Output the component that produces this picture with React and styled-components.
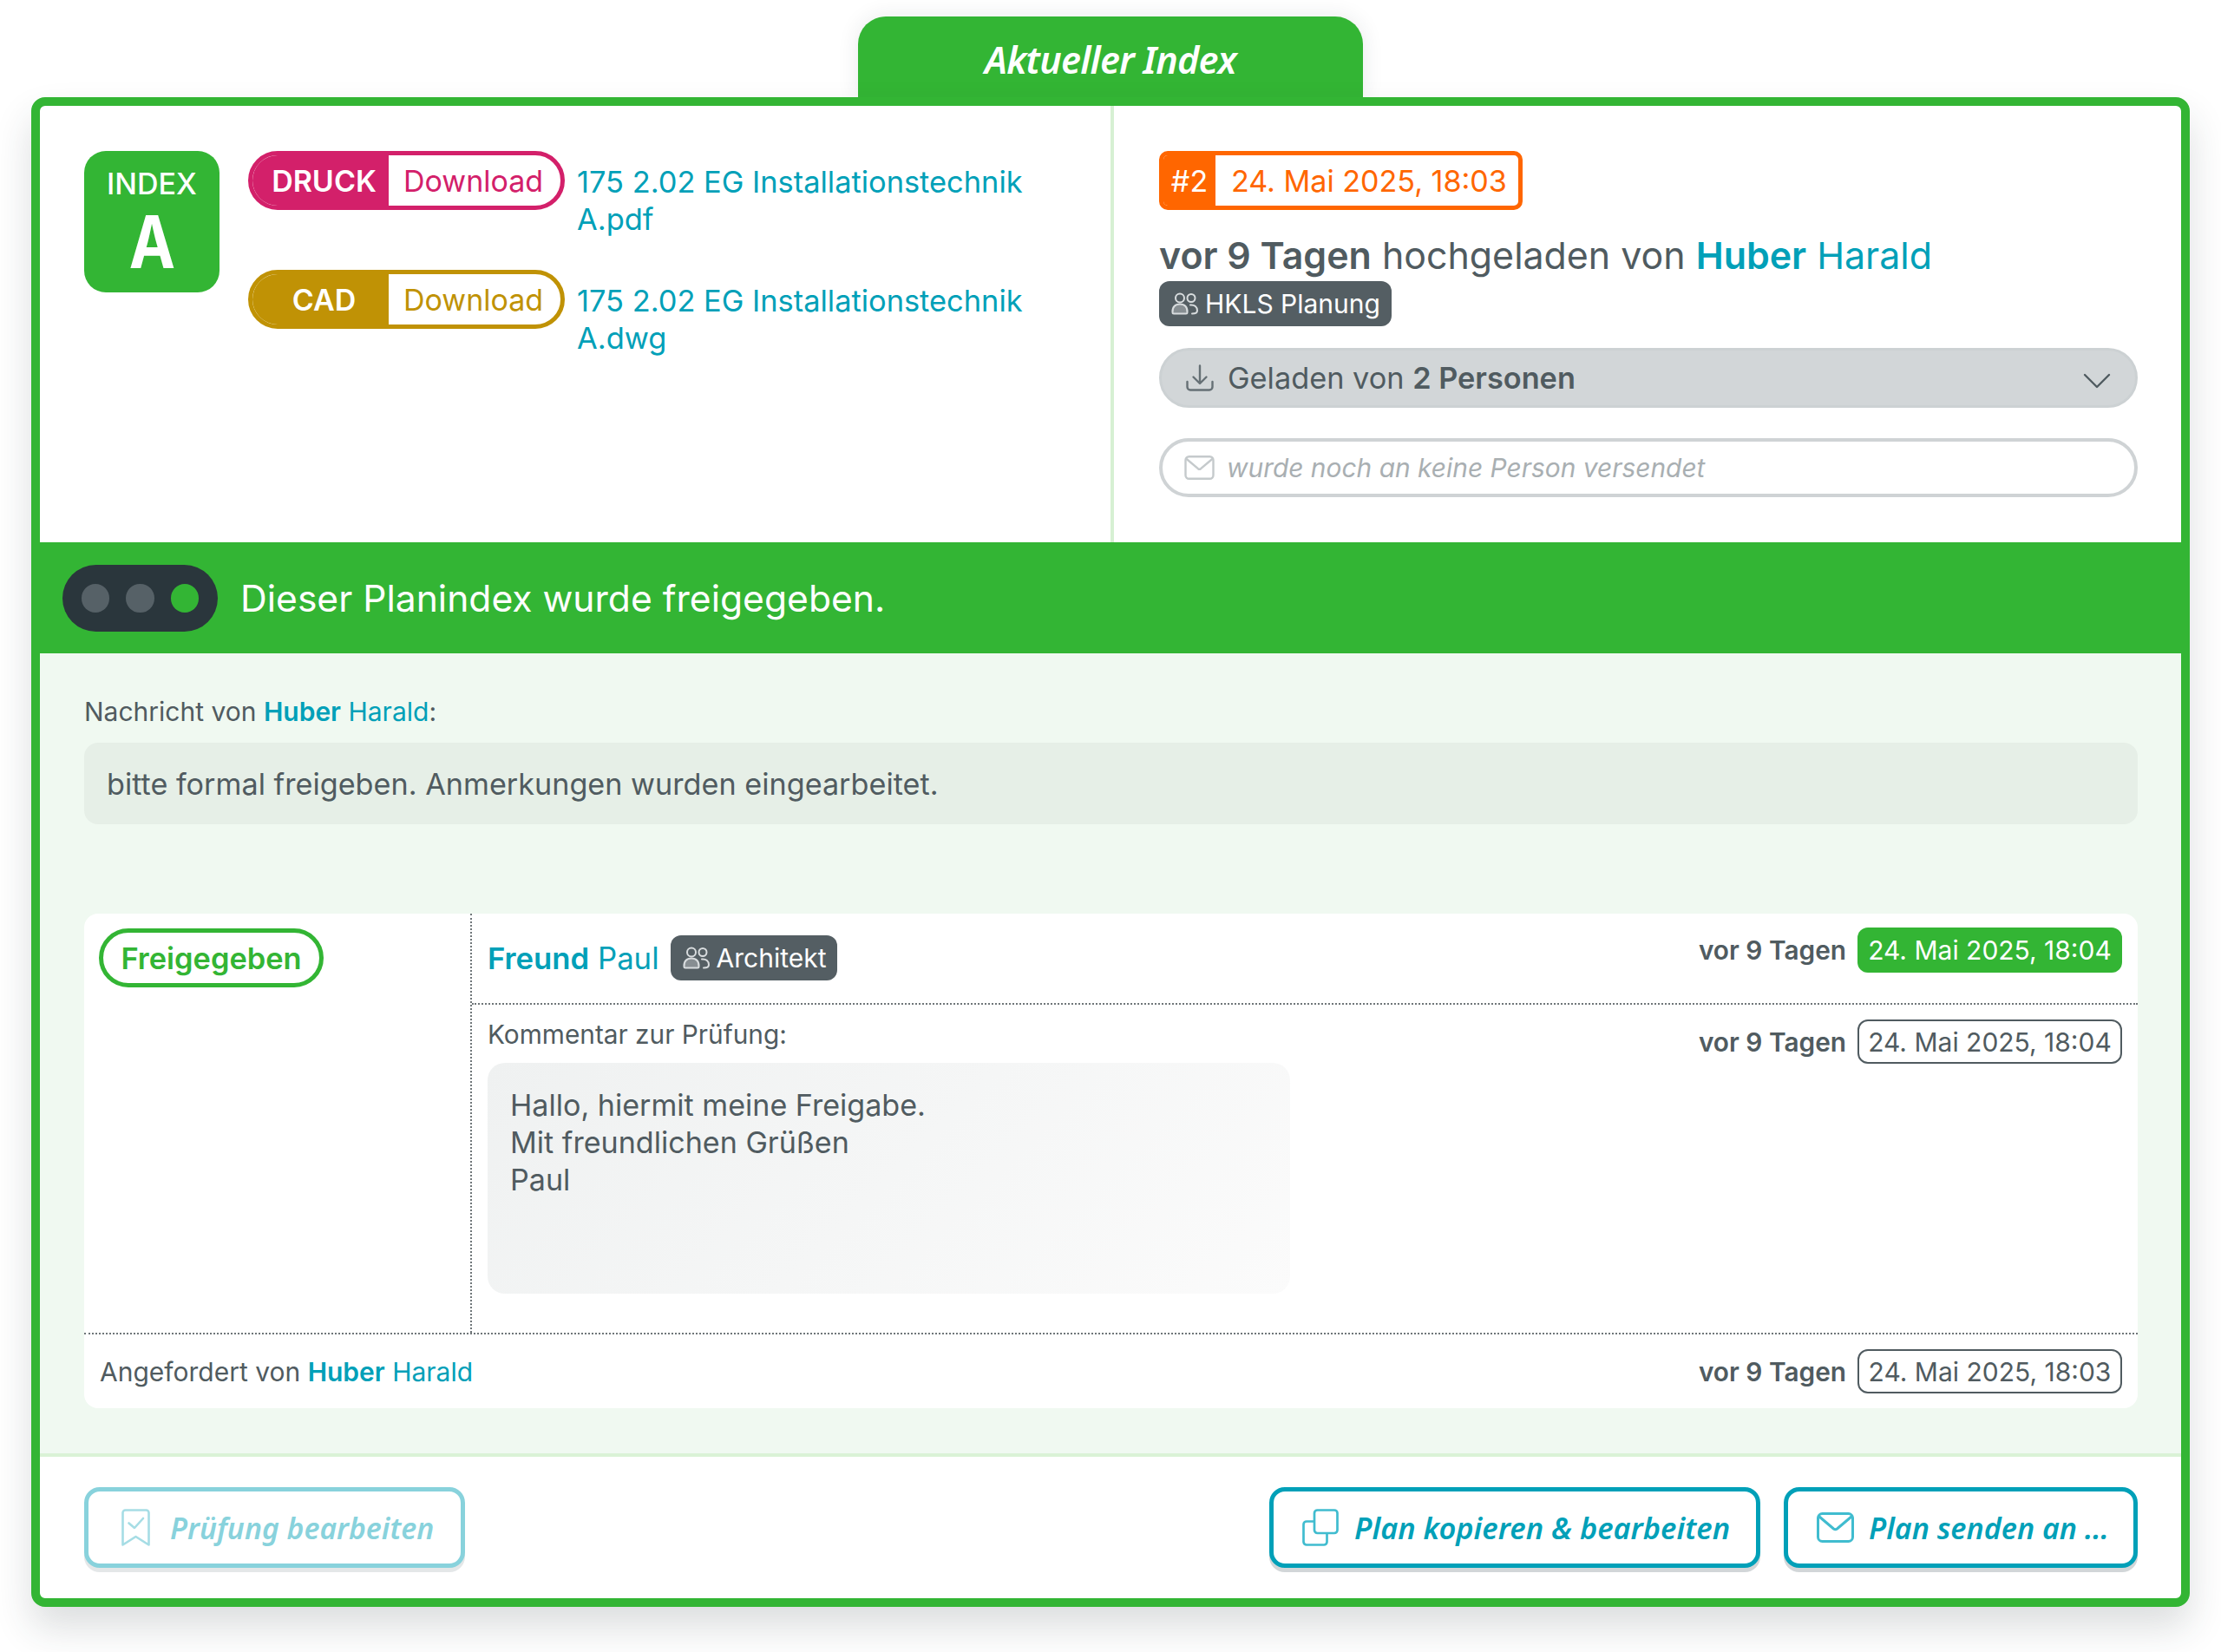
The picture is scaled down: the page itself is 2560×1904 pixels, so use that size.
import React from "react";
import styled, { createGlobalStyle } from "styled-components";

const GREEN = "#33b534";
const TEAL = "#00a0b8";
const SLATE = "#505b60";
const DOT = "#6f7679";

const Global = createGlobalStyle`
  * { box-sizing: border-box; }
  html, body { margin: 0; padding: 0; background: #fff; }
  body { font-family: Inter, "Liberation Sans", sans-serif; color: ${SLATE}; }
`;

const Page = styled.div`
  width: 2560px;
  height: 1904px;
  padding: 19px 36px 0;
  display: flex;
  flex-direction: column;
  align-items: center;
`;
const Tab = styled.div`
  width: 582px;
  height: 93px;
  background: ${GREEN};
  border-radius: 32px 32px 0 0;
  box-shadow: 0 0 24px rgba(40, 50, 55, 0.1);
  color: #fff;
  font-family: "Noto Sans", sans-serif;
  font-style: italic;
  font-weight: 600;
  font-size: 43px;
  letter-spacing: -0.8px;
  display: flex;
  align-items: center;
  justify-content: center;
  padding-top: 6px;
`;
const Card = styled.div`
  width: 100%;
  height: 1740px;
  border: 10px solid ${GREEN};
  border-radius: 16px;
  background: #fff;
  display: flex;
  flex-direction: column;
  box-shadow: 0 24px 44px rgba(40, 50, 55, 0.16);
`;
const Top = styled.div`
  height: 503px;
  display: grid;
  grid-template-columns: 1238px 1fr;
`;
const LeftPane = styled.div`
  border-right: 4px solid #d6f0d3;
  padding: 52px 51px;
  display: flex;
  gap: 33px;
  align-items: flex-start;
`;
const IndexBox = styled.div`
  width: 156px;
  height: 163px;
  flex: none;
  border-radius: 25px;
  background: ${GREEN};
  color: #fff;
  display: flex;
  flex-direction: column;
  align-items: center;
  padding-top: 16px;
`;
const IndexLabel = styled.div`
  font-size: 34px;
  font-weight: 500;
  line-height: 44px;
`;
const IndexLetter = styled.div`
  font-size: 84px;
  font-weight: 700;
  line-height: 84px;
  margin-top: 3px;
  transform: scaleX(0.85);
`;
const Files = styled.div`
  display: flex;
  flex-direction: column;
  gap: 37px;
`;
const FileRow = styled.div`
  display: flex;
  gap: 14px;
  align-items: flex-start;
`;
const Pill = styled.div`
  width: 365px;
  height: 68px;
  flex: none;
  border-radius: 34px;
  border: 5px solid ${(p) => p.$color};
  display: flex;
  overflow: hidden;
  background: #fff;
`;
const PillLabel = styled.div`
  width: 157px;
  background: ${(p) => p.$color};
  color: #fff;
  font-weight: 600;
  font-size: 34px;
  padding-left: 8px;
  display: flex;
  align-items: center;
  justify-content: center;
`;
const PillAction = styled.div`
  flex: 1;
  color: ${(p) => p.$color};
  border-left: 2px solid #fff;
  font-size: 34px;
  display: flex;
  align-items: center;
  padding-left: 15px;
`;
const FileLink = styled.div`
  width: 540px;
  color: ${TEAL};
  font-size: 34.4px;
  line-height: 43px;
  padding-top: 14px;
`;
const RightPane = styled.div`
  padding: 52px 50px 0 52px;
  display: flex;
  flex-direction: column;
  align-items: flex-start;
`;
const Stamp = styled.div`
  height: 68px;
  display: flex;
  border: 5px solid #ff6600;
  border-radius: 10px;
  overflow: hidden;
`;
const StampNo = styled.div`
  width: 60px;
  background: #ff6600;
  color: #fff;
  font-size: 34px;
  display: flex;
  align-items: center;
  justify-content: center;
`;
const StampDate = styled.div`
  padding: 0 13px 0 18px;
  color: #ff6600;
  font-size: 34.1px;
  display: flex;
  align-items: center;
`;
const Headline = styled.div`
  margin-top: 25px;
  font-size: 42.9px;
  line-height: 54px;
  height: 57px;
`;
const Strong = styled.span`
  font-weight: 600;
`;
const Person = styled.span`
  color: ${TEAL};
`;
const Tag = styled.div`
  height: 52px;
  display: inline-flex;
  align-items: center;
  gap: 8px;
  padding: 0 13px 0 14px;
  background: #545e63;
  border-radius: 12px;
  color: #fff;
  font-size: 30px;
`;
const Loaded = styled.div`
  width: 100%;
  height: 69px;
  margin-top: 25px;
  border-radius: 35px;
  background: #d2d6d8;
  border: 3px solid #ccd1d3;
  display: flex;
  align-items: center;
  gap: 16px;
  padding: 0 28px 0 28px;
  font-size: 34.3px;
`;
const Grow = styled.div`
  flex: 1;
`;
const Sent = styled.div`
  width: 100%;
  height: 68px;
  margin-top: 35px;
  border-radius: 34px;
  background: #fff;
  border: 4.5px solid #cfd3d5;
  display: flex;
  align-items: center;
  gap: 14px;
  padding: 0 0 0 25px;
  font-size: 29.9px;
  font-style: italic;
  color: #a9afb2;
`;
const Status = styled.div`
  height: 128px;
  background: ${GREEN};
  display: flex;
  align-items: center;
  gap: 26px;
  padding: 0 26px;
  color: #fff;
  font-size: 42.6px;
`;
const Lights = styled.div`
  width: 179px;
  height: 77px;
  border-radius: 39px;
  background: #2a363c;
  display: flex;
  align-items: center;
  gap: 19px;
  padding: 0 22px;
`;
const Light = styled.div`
  width: 33px;
  height: 33px;
  border-radius: 50%;
  background: ${(p) => (p.$on ? GREEN : "#566167")};
`;
const Section = styled.div`
  height: 926px;
  background: #f0f9f1;
  border-bottom: 4px solid #daf2d6;
  padding: 47px 50px 0 51px;
`;
const Label = styled.div`
  font-size: 30px;
  line-height: 40px;
`;
const Message = styled.div`
  margin-top: 16px;
  height: 94px;
  background: #e6efe7;
  border-radius: 16px;
  padding: 0 26px;
  display: flex;
  align-items: center;
  font-size: 34.2px;
`;
const Table = styled.div`
  margin-top: 103px;
  height: 570px;
  background: #fff;
  border-radius: 16px;
  display: flex;
  flex-direction: column;
`;
const TableBody = styled.div`
  height: 485px;
  display: grid;
  grid-template-columns: 447px 1fr;
  border-bottom: 2px dotted ${DOT};
`;
const StateCell = styled.div`
  border-right: 2px dotted ${DOT};
  padding: 17px 0 0 17px;
`;
const StatePill = styled.div`
  display: inline-flex;
  align-items: center;
  justify-content: center;
  width: 259px;
  height: 68px;
  border-radius: 34px;
  border: 5px solid ${GREEN};
  color: ${GREEN};
  font-weight: 600;
  font-size: 34.4px;
`;
const Detail = styled.div`
  display: flex;
  flex-direction: column;
`;
const DetailHead = styled.div`
  height: 105px;
  border-bottom: 2px dotted ${DOT};
  padding: 16px 18px 0 18px;
  display: flex;
  justify-content: space-between;
  align-items: flex-start;
`;
const Reviewer = styled.div`
  display: flex;
  align-items: center;
  gap: 13px;
  padding-top: 9px;
  font-size: 34.7px;
`;
const Meta = styled.div`
  display: flex;
  align-items: center;
  gap: 13px;
  font-size: 29.8px;
  font-weight: 600;
`;
const DateChip = styled.div`
  width: 305px;
  height: ${(p) => (p.$solid ? 52 : 51)}px;
  border-radius: 12px;
  font-size: 30px;
  font-weight: 400;
  display: flex;
  align-items: center;
  justify-content: center;
  background: ${(p) => (p.$solid ? GREEN : "#fff")};
  color: ${(p) => (p.$solid ? "#fff" : SLATE)};
  border: ${(p) => (p.$solid ? "none" : `2.5px solid ${SLATE}`)};
`;
const CommentRow = styled.div`
  flex: 1;
  display: flex;
  justify-content: space-between;
  align-items: flex-start;
  padding: 17px 18px 0;
`;
const CommentCol = styled.div`
  width: 925px;
`;
const CommentLabel = styled(Label)`
  margin-top: -3px;
  font-size: 29.8px;
`;
const CommentBox = styled.div`
  margin-top: 13px;
  height: 266px;
  border-radius: 20px;
  background: linear-gradient(135deg, #eff1f1, #fbfbfb);
  padding: 27px 26px;
  font-size: 34.1px;
  line-height: 43px;
`;
const RequestRow = styled.div`
  flex: 1;
  display: flex;
  justify-content: space-between;
  align-items: center;
  padding: 0 18px;
`;
const Footer = styled.div`
  flex: 1;
  padding: 35px 50px 0 51px;
  display: flex;
  justify-content: space-between;
  align-items: flex-start;
`;
const Actions = styled.div`
  display: flex;
  gap: 27px;
`;
const Button = styled.div`
  height: 93px;
  border: 5px solid ${(p) => (p.$muted ? "#88d2dc" : TEAL)};
  border-radius: 18px;
  box-shadow: 0 5px 0 ${(p) => (p.$muted ? "#e4e7e8" : "#d2d6d8")};
  background: #fff;
  color: ${(p) => (p.$muted ? "#88d2dc" : TEAL)};
  font-family: "Noto Sans", sans-serif;
  font-style: italic;
  font-weight: 600;
  font-size: ${(p) => p.$size || 34}px;
  display: flex;
  align-items: center;
  gap: ${(p) => p.$gap}px;
  padding: 0 0 0 ${(p) => p.$pl}px;
  width: ${(p) => p.$w}px;
`;
const IconBox = styled.svg`
  flex: none;
  display: block;
`;
const ChevronBox = styled(IconBox)`
  margin-top: 6px;
`;

const UsersIcon = () => (
  <IconBox width="31" height="26" viewBox="0 0 31 26" fill="none" stroke="#d8dcde" strokeWidth="2">
    <circle cx="10" cy="6.5" r="5" />
    <path d="M1.5 23c-.5-6 3-9.5 8.5-9.5s9 3.5 8.5 9.5c0 .8-.6 1.5-1.5 1.5H3c-.9 0-1.5-.7-1.5-1.5z" fill="rgba(255,255,255,.3)" />
    <circle cx="23" cy="6.5" r="4.5" />
    <path d="M22 14.5c5-.5 8 2.5 8 6.5 0 2.5-2 3.5-6 3.5" strokeLinecap="round" />
  </IconBox>
);
const DownloadIcon = () => (
  <IconBox width="32" height="31" viewBox="0 0 32 31" fill="none" stroke="#667075" strokeWidth="2.4" strokeLinecap="round" strokeLinejoin="round">
    <path d="M16 1.5v20M8.5 14.5l7.5 7.5 7.5-7.5" />
    <path d="M1.5 20v6a3.5 3.5 0 0 0 3.5 3.5h22a3.5 3.5 0 0 0 3.5-3.5v-6" />
  </IconBox>
);
const Chevron = () => (
  <ChevronBox width="32" height="18" viewBox="0 0 32 18" fill="none" stroke={SLATE} strokeWidth="2.4" strokeLinecap="round" strokeLinejoin="round">
    <path d="M2 2l14 14L30 2" />
  </ChevronBox>
);
const MailIcon = ({ color, w = 43, h = 35 }) => (
  <IconBox width={w} height={h} viewBox="0 0 43 35" fill="none" stroke={color} strokeWidth="3" strokeLinejoin="round" strokeLinecap="round">
    <rect x="1.5" y="1.5" width="40" height="32" rx="5" />
    <path d="M3 5l16.5 14q2 1.5 4 0L40 5" />
  </IconBox>
);
const BookmarkIcon = ({ color }) => (
  <IconBox width="33" height="43" viewBox="0 0 33 43" fill="none" stroke={color} strokeWidth="2.6" strokeLinejoin="round" strokeLinecap="round">
    <path d="M1.5 4.5a3 3 0 0 1 3-3h24a3 3 0 0 1 3 3v37l-15-9.5-15 9.5z" />
    <path d="M8.5 16.5L15 22l10-11" />
  </IconBox>
);
const CopyIcon = ({ color }) => (
  <IconBox width="42" height="43" viewBox="0 0 42 43" fill="none" stroke={color} strokeWidth="2.7" strokeLinejoin="round">
    <rect x="14" y="1.5" width="26.5" height="26.5" rx="3.5" />
    <path d="M14 14.5H5a3.5 3.5 0 0 0-3.5 3.5v20A3.5 3.5 0 0 0 5 41.5h20a3.5 3.5 0 0 0 3.5-3.5V28" />
  </IconBox>
);

export default function App() {
  return (
    <Page>
      <Global />
      <Tab>Aktueller Index</Tab>
      <Card>
        <Top>
          <LeftPane>
            <IndexBox>
              <IndexLabel>INDEX</IndexLabel>
              <IndexLetter>A</IndexLetter>
            </IndexBox>
            <Files>
              <FileRow>
                <Pill $color="#d3206a">
                  <PillLabel $color="#d3206a">DRUCK</PillLabel>
                  <PillAction $color="#d3206a">Download</PillAction>
                </Pill>
                <FileLink>175 2.02 EG Installationstechnik A.pdf</FileLink>
              </FileRow>
              <FileRow>
                <Pill $color="#c09205">
                  <PillLabel $color="#c09205">CAD</PillLabel>
                  <PillAction $color="#c09205">Download</PillAction>
                </Pill>
                <FileLink>175 2.02 EG Installationstechnik A.dwg</FileLink>
              </FileRow>
            </Files>
          </LeftPane>
          <RightPane>
            <Stamp>
              <StampNo>#2</StampNo>
              <StampDate>24. Mai 2025, 18:03</StampDate>
            </Stamp>
            <Headline>
              <Strong>vor 9 Tagen</Strong> hochgeladen von{" "}
              <Person>
                <Strong>Huber</Strong> Harald
              </Person>
            </Headline>
            <Tag>
              <UsersIcon />
              HKLS Planung
            </Tag>
            <Loaded>
              <DownloadIcon />
              <span>
                Geladen von <Strong>2 Personen</Strong>
              </span>
              <Grow />
              <Chevron />
            </Loaded>
            <Sent>
              <MailIcon color="#c5cacc" w={35} h={28} />
              wurde noch an keine Person versendet
            </Sent>
          </RightPane>
        </Top>
        <Status>
          <Lights>
            <Light />
            <Light />
            <Light $on />
          </Lights>
          Dieser Planindex wurde freigegeben.
        </Status>
        <Section>
          <Label>
            Nachricht von{" "}
            <Person>
              <Strong>Huber</Strong> Harald
            </Person>
            :
          </Label>
          <Message>bitte formal freigeben. Anmerkungen wurden eingearbeitet.</Message>
          <Table>
            <TableBody>
              <StateCell>
                <StatePill>Freigegeben</StatePill>
              </StateCell>
              <Detail>
                <DetailHead>
                  <Reviewer>
                    <Person>
                      <Strong>Freund</Strong> Paul
                    </Person>
                    <Tag>
                      <UsersIcon />
                      Architekt
                    </Tag>
                  </Reviewer>
                  <Meta>
                    vor 9 Tagen
                    <DateChip $solid>24. Mai 2025, 18:04</DateChip>
                  </Meta>
                </DetailHead>
                <CommentRow>
                  <CommentCol>
                    <CommentLabel>Kommentar zur Prüfung:</CommentLabel>
                    <CommentBox>
                      Hallo, hiermit meine Freigabe.
                      <br />
                      Mit freundlichen Grüßen
                      <br />
                      Paul
                    </CommentBox>
                  </CommentCol>
                  <Meta>
                    vor 9 Tagen
                    <DateChip>24. Mai 2025, 18:04</DateChip>
                  </Meta>
                </CommentRow>
              </Detail>
            </TableBody>
            <RequestRow>
              <Label>
                Angefordert von{" "}
                <Person>
                  <Strong>Huber</Strong> Harald
                </Person>
              </Label>
              <Meta>
                vor 9 Tagen
                <DateChip>24. Mai 2025, 18:03</DateChip>
              </Meta>
            </RequestRow>
          </Table>
        </Section>
        <Footer>
          <Button $muted $w={439} $gap={23} $pl={38} $size={33.7}>
            <BookmarkIcon color="#a6dde5" />
            Prüfung bearbeiten
          </Button>
          <Actions>
            <Button $w={566} $gap={18} $pl={33} $size={34.4}>
              <CopyIcon color="#40bccf" />
              Plan kopieren &amp; bearbeiten
            </Button>
            <Button $w={408} $gap={17} $pl={33}>
              <MailIcon color="#40bccf" />
              Plan senden an ...
            </Button>
          </Actions>
        </Footer>
      </Card>
    </Page>
  );
}
